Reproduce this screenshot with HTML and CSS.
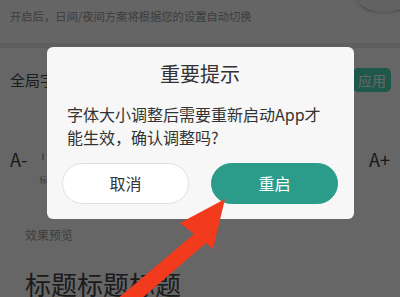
FILE: index.html
```html
<!DOCTYPE html>
<html lang="zh-CN">
<head>
<meta charset="utf-8">
<title>字体大小</title>
<link rel="stylesheet" href="styles.css">
</head>
<body>
<div class="page">
  <div class="top">
    <p class="hint">开启后，日间/夜间方案将根据您的设置自动切换</p>
    <span class="switch"><span class="knob"></span></span>
  </div>
  <div class="band"></div>
  <div class="row font-row">
    <span class="label">全局字体大小</span>
    <button class="apply">应用</button>
  </div>
  <div class="row slider-row">
    <span class="size">A-</span>
    <div class="track">
      <span class="tick"></span>
      <span class="mark">标准</span>
    </div>
    <span class="size">A+</span>
  </div>
  <p class="preview-label">效果预览</p>
  <p class="preview-title">标题标题标题</p>
</div>
<div class="mask"></div>
<div class="dialog">
  <h2 class="dialog-title">重要提示</h2>
  <p class="dialog-body">字体大小调整后需要重新启动App才能生效，确认调整吗?</p>
  <div class="dialog-actions">
    <button class="btn btn-cancel">取消</button>
    <button class="btn btn-ok">重启</button>
  </div>
</div>
<svg class="arrow" width="400" height="297" viewBox="0 0 400 297">
  <polygon points="225,199 180,223 194,234 116,300 140,300 206,243 213,249" fill="#f23a1c"/>
</svg>
</body>
</html>
```

FILE: styles.css
```css
* { box-sizing: border-box; }

html, body {
  margin: 0;
  padding: 0;
  width: 400px;
  height: 297px;
  overflow: hidden;
  background: #fff;
  font-family: "Noto Sans CJK SC", "Noto Sans", sans-serif;
  color: #444;
}

.page {
  position: relative;
  width: 400px;
  height: 297px;
}

.top {
  position: relative;
  height: 43px;
  padding: 9px 10px 0;
  background: #fcfcfc;
  overflow: hidden;
}

.hint {
  margin: 0;
  font-size: 11.3px;
  line-height: 14px;
  color: #999;
  white-space: nowrap;
}

.switch {
  position: absolute;
  right: -20px;
  top: -8px;
  width: 60px;
  height: 20px;
  border-radius: 10px;
  background: #e8e8e8;
}

.knob {
  position: absolute;
  left: -4px;
  top: -16px;
  width: 56px;
  height: 36px;
  border-radius: 50%;
  background: #f6f6f6;
  box-shadow: 0 1px 4px rgba(0, 0, 0, 0.18);
}

.band {
  height: 5px;
  background: #ececec;
}

.row {
  display: flex;
  align-items: center;
  padding: 0 10px;
}

.font-row {
  height: 64px;
  justify-content: space-between;
}

.label {
  font-size: 15px;
  line-height: 20px;
  color: #444;
}

.apply {
  width: 38px;
  height: 24px;
  margin-right: -1px;
  padding: 0;
  border: 0;
  border-radius: 5px;
  background: #4cdcbc;
  color: #fff;
  font-family: inherit;
  font-size: 14px;
  line-height: 24px;
}

.slider-row {
  height: 94px;
}

.size {
  font-size: 18px;
  line-height: 22px;
  color: #3a3a3a;
}

.track {
  flex: 1;
  align-self: stretch;
  display: flex;
  flex-direction: column;
  align-items: flex-start;
  margin: 0 12px;
  padding-top: 41px;
}

.tick {
  width: 2px;
  height: 7px;
  margin-left: 3px;
  background: #bbb;
}

.mark {
  margin-top: 15px;
  font-size: 8px;
  line-height: 10px;
  color: #999;
}

.preview-label {
  margin: 20px 0 0 25px;
  font-size: 12px;
  line-height: 18px;
  color: #999;
}

.preview-title {
  margin: 27px 0 0 25px;
  font-size: 26px;
  line-height: 26px;
  color: #444;
  white-space: nowrap;
}

.mask {
  position: absolute;
  inset: 0;
  background: rgba(0, 0, 0, 0.6);
}

.dialog {
  position: absolute;
  left: 47px;
  top: 47px;
  width: 307px;
  padding: 13px 16px 15px 15px;
  border-radius: 6px;
  background: #f7f7f7;
}

.dialog-title {
  margin: 0;
  font-size: 20px;
  line-height: 28px;
  font-weight: normal;
  text-align: center;
  color: #333;
}

.dialog-body {
  margin: 15px 0 0;
  padding: 0 12px 0 5px;
  font-size: 16px;
  line-height: 23px;
  color: #333;
}

.dialog-actions {
  display: flex;
  gap: 22px;
  margin-top: 14px;
}

.btn {
  flex: 1;
  height: 41px;
  padding: 0;
  border-radius: 21px;
  font-family: inherit;
  font-size: 16px;
  line-height: 39px;
}

.btn-cancel {
  background: #fff;
  border: 1px solid #e0e0e0;
  color: #333;
}

.btn-ok {
  background: #2a9c89;
  border: 1px solid #2a9c89;
  color: #fff;
}

.arrow {
  position: absolute;
  left: 0;
  top: 0;
  pointer-events: none;
}
```
